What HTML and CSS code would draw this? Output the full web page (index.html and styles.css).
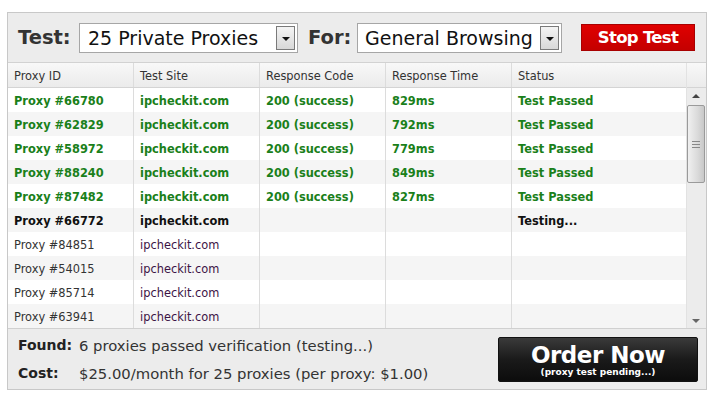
FILE: index.html
```html
<!DOCTYPE html>
<html lang="en">
<head>
    <meta charset="UTF-8">
    <title>Proxy Test</title>
    <link rel="stylesheet" href="styles.css">
</head>
<body>
    <div class="panel">
        <div class="toolbar">
            <span class="label">Test:</span>
            <div class="select select-test">
                <span class="select-text">25 Private Proxies</span>
                <span class="select-arrow"></span>
            </div>
            <span class="label label-for">For:</span>
            <div class="select select-for">
                <span class="select-text">General Browsing</span>
                <span class="select-arrow"></span>
            </div>
            <button class="stop-btn">Stop Test</button>
        </div>

        <div class="grid-wrap">
            <div class="grid">
                <div class="row head">
                    <div>Proxy ID</div><div>Test Site</div><div>Response Code</div><div>Response Time</div><div>Status</div>
                </div>
                <div class="body">
                    <div class="row passed"><div>Proxy #66780</div><div>ipcheckit.com</div><div>200 (success)</div><div>829ms</div><div>Test Passed</div></div>
                    <div class="row passed"><div>Proxy #62829</div><div>ipcheckit.com</div><div>200 (success)</div><div>792ms</div><div>Test Passed</div></div>
                    <div class="row passed"><div>Proxy #58972</div><div>ipcheckit.com</div><div>200 (success)</div><div>779ms</div><div>Test Passed</div></div>
                    <div class="row passed"><div>Proxy #88240</div><div>ipcheckit.com</div><div>200 (success)</div><div>849ms</div><div>Test Passed</div></div>
                    <div class="row passed"><div>Proxy #87482</div><div>ipcheckit.com</div><div>200 (success)</div><div>827ms</div><div>Test Passed</div></div>
                    <div class="row testing"><div>Proxy #66772</div><div>ipcheckit.com</div><div></div><div></div><div>Testing...</div></div>
                    <div class="row waiting"><div>Proxy #84851</div><div class="site">ipcheckit.com</div><div></div><div></div><div></div></div>
                    <div class="row waiting"><div>Proxy #54015</div><div class="site">ipcheckit.com</div><div></div><div></div><div></div></div>
                    <div class="row waiting"><div>Proxy #85714</div><div class="site">ipcheckit.com</div><div></div><div></div><div></div></div>
                    <div class="row waiting"><div>Proxy #63941</div><div class="site">ipcheckit.com</div><div></div><div></div><div></div></div>
                </div>
            </div>
            <div class="scrollbar">
                <div class="scroll-head"></div>
                <div class="scroll-track">
                    <div class="scroll-up"></div>
                    <div class="scroll-thumb"><span></span><span></span><span></span></div>
                    <div class="scroll-space"></div>
                    <div class="scroll-down"></div>
                </div>
            </div>
        </div>

        <div class="footer">
            <div class="summary">
                <div class="line"><b>Found:</b><span>6 proxies passed verification (testing...)</span></div>
                <div class="line"><b>Cost:</b><span>$25.00/month for 25 proxies (per proxy: $1.00)</span></div>
            </div>
            <button class="order-btn">
                <span class="order-main">Order Now</span>
                <span class="order-sub">(proxy test pending...)</span>
            </button>
        </div>
    </div>
</body>
</html>
```

FILE: styles.css
```css
body {
    margin: 0;
    padding: 12px 9px 0 7px;
    font-family: "DejaVu Sans", Verdana, sans-serif;
    background: #fff;
}

.panel {
    width: 698px;
    border: 1px solid #c8c8c8;
    background: #ececec;
}

/* top bar */
.toolbar {
    height: 49px;
    display: flex;
    align-items: center;
    padding: 0 0 0 10px;
    border-bottom: 1px solid #d2d2d2;
}

.label {
    font-size: 19.5px;
    font-weight: bold;
    color: #333;
    width: 61px;
}

.label-for {
    margin-left: 10px;
    width: 49px;
}

.select {
    height: 30px;
    box-sizing: border-box;
    border: 1px solid #a6a6a6;
    background: #fff;
    display: flex;
    align-items: center;
    padding-left: 8px;
}

.select-test { width: 219px; }
.select-for { width: 205px; padding-left: 7px; }

.select-text {
    flex: 1;
    font-size: 19px;
    color: #111;
    white-space: nowrap;
    overflow: hidden;
}

.select-arrow {
    width: 19px;
    height: 24px;
    margin-right: 2px;
    box-sizing: border-box;
    border: 1px solid #7a7a7a;
    background: linear-gradient(#f4f4f4, #d8d8d8);
    position: relative;
}

.select-arrow::after {
    content: "";
    position: absolute;
    left: 5px;
    top: 10px;
    border-left: 4px solid transparent;
    border-right: 4px solid transparent;
    border-top: 4px solid #111;
}

.stop-btn {
    margin-left: 19px;
    width: 114px;
    height: 27px;
    border: 1px solid #a80000;
    background: linear-gradient(#e00000, #c40000);
    color: #fff;
    font-family: inherit;
    font-weight: bold;
    font-size: 16.5px;
    letter-spacing: -0.7px;
    padding: 0;
}

/* table */
.grid-wrap {
    display: flex;
    background: #fff;
}

.grid {
    width: 679px;
}

.row {
    display: grid;
    grid-template-columns: 126px 126px 126px 126px 1fr;
    height: 24px;
}

.row > div {
    border-right: 1px solid #dcdcdc;
    padding: 2px 0 0 6px;
    display: flex;
    align-items: center;
    font-size: 11.4px;
    white-space: nowrap;
}

.row > div:last-child {
    border-right: none;
}

.head {
    height: 25px;
    background: linear-gradient(#f8f8f8, #ebebeb);
    border-bottom: 1px solid #d4d4d4;
    box-sizing: border-box;
}

.head > div {
    color: #333;
}

.body .row:nth-child(even) {
    background: #f5f5f5;
}

.passed > div {
    color: #1a801a;
    font-weight: bold;
}

.testing > div {
    color: #111;
    font-weight: bold;
}

.waiting > div {
    color: #333;
}

.waiting .site {
    color: #3c1446;
}

/* scrollbar */
.scrollbar {
    width: 19px;
    border-left: 1px solid #e2e2e2;
    display: flex;
    flex-direction: column;
    background: #ececec;
}

.scroll-head {
    height: 25px;
    background: linear-gradient(#f8f8f8, #ebebeb);
    border-bottom: 1px solid #d4d4d4;
    box-sizing: border-box;
}

.scroll-track {
    flex: 1;
    display: flex;
    flex-direction: column;
}

.scroll-up, .scroll-down {
    height: 17px;
    position: relative;
}

.scroll-up::after, .scroll-down::after {
    content: "";
    position: absolute;
    left: 5px;
    border-left: 4px solid transparent;
    border-right: 4px solid transparent;
}

.scroll-up::after {
    top: 6px;
    border-bottom: 4px solid #444;
}

.scroll-down::after {
    top: 8px;
    border-top: 4px solid #666;
}

.scroll-thumb {
    height: 76px;
    margin: 0 1px 0 0;
    border: 1px solid #9a9a9a;
    border-radius: 2px;
    background: linear-gradient(90deg, #f0f0f0, #dadada 60%, #c8c8c8);
    display: flex;
    flex-direction: column;
    justify-content: center;
    align-items: center;
    gap: 2px;
}

.scroll-thumb span {
    width: 8px;
    height: 1px;
    background: #888;
}

.scroll-space {
    flex: 1;
}

/* footer */
.footer {
    height: 60px;
    border-top: 1px solid #d0d0d0;
    display: flex;
    align-items: center;
    padding-left: 10px;
}

.summary {
    flex: 1;
    display: flex;
    flex-direction: column;
    gap: 11px;
}

.line {
    display: flex;
    font-size: 14.8px;
    color: #333;
}

.line b {
    width: 61px;
    font-size: 14px;
    color: #222;
}

.order-btn {
    margin-right: 8px;
    width: 200px;
    height: 45px;
    border: 1px solid #111;
    border-radius: 2px;
    background: linear-gradient(#3a3a3a, #1a1a1a 50%, #0c0c0c);
    color: #fff;
    font-family: inherit;
    display: flex;
    flex-direction: column;
    align-items: center;
    justify-content: center;
    padding: 2px 0 0;
}

.order-main {
    font-size: 23px;
    font-weight: bold;
    line-height: 24px;
    letter-spacing: -0.5px;
}

.order-sub {
    font-size: 9px;
    font-weight: bold;
    line-height: 10px;
}
```
